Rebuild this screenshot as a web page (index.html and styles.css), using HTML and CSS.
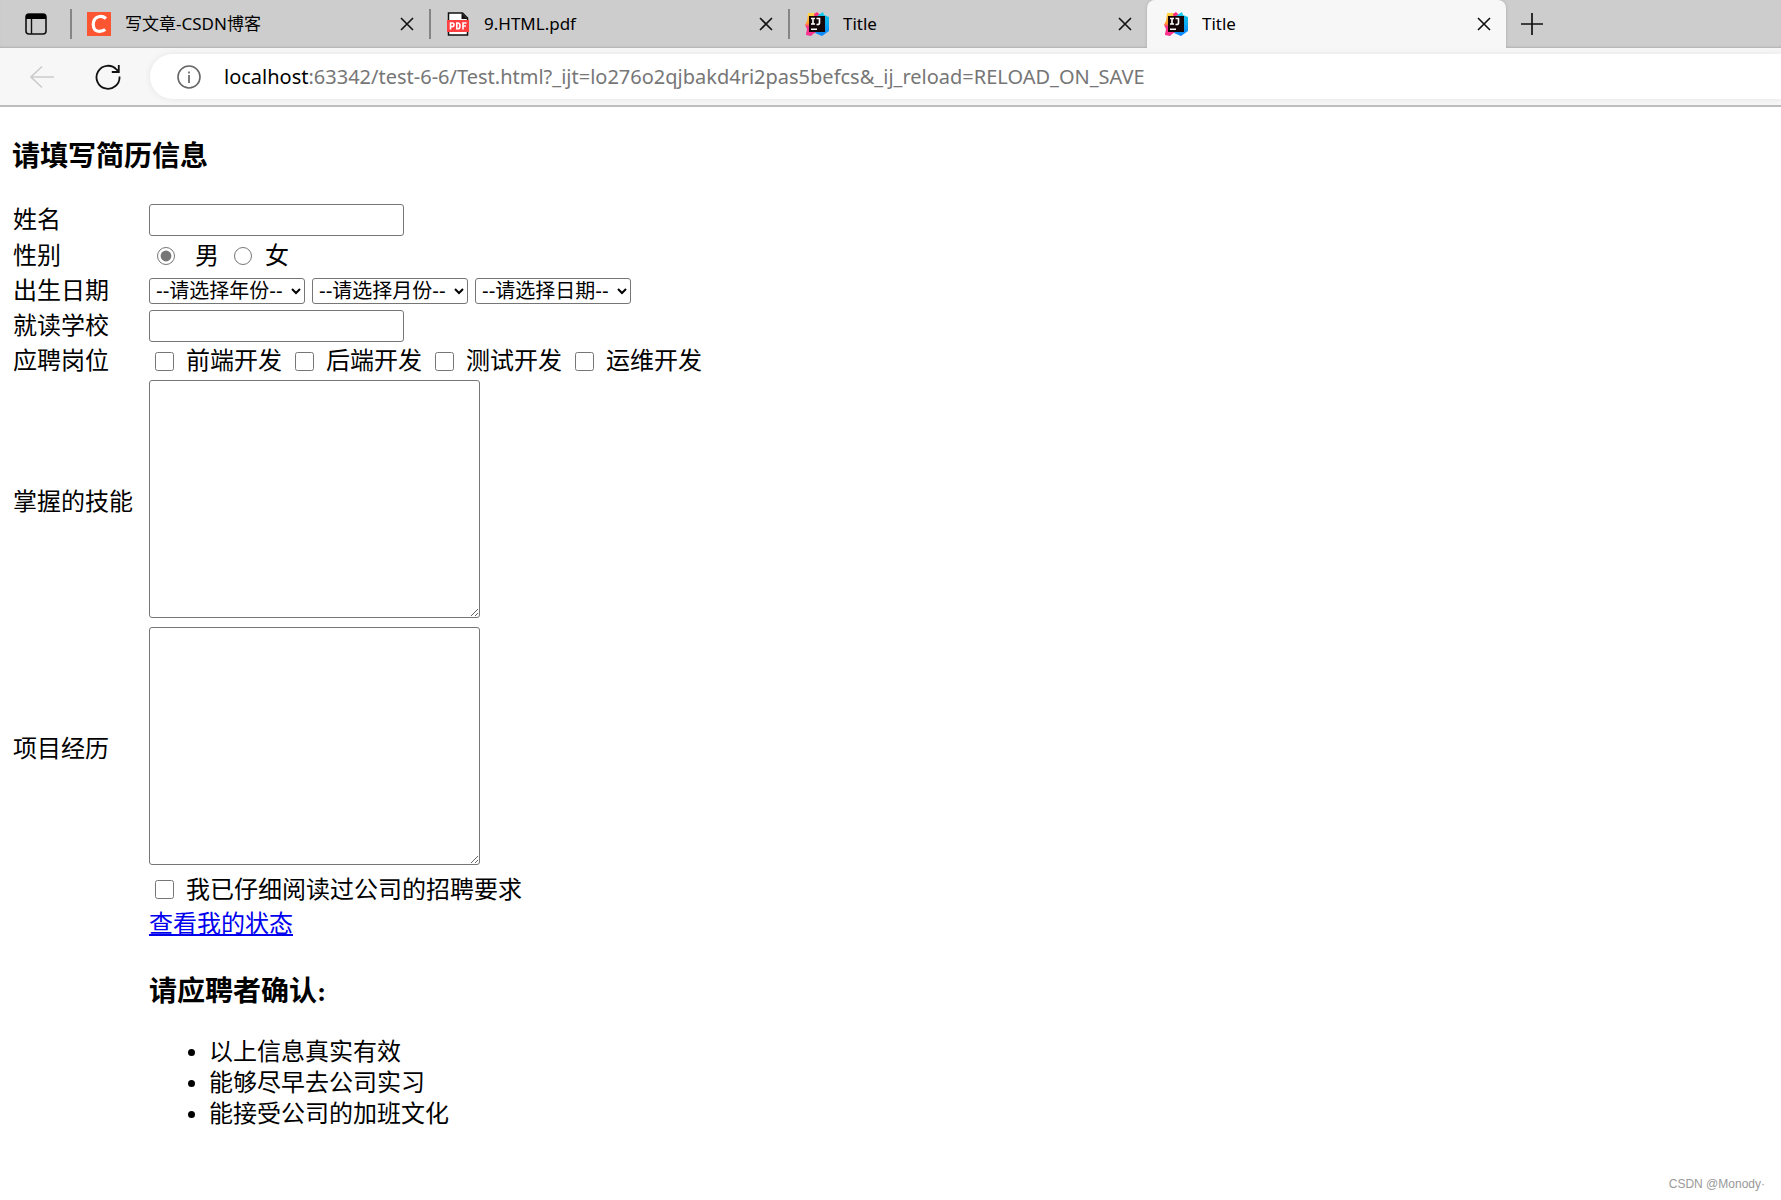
FILE: index.html
```html
<!DOCTYPE html>
<html lang="zh-CN">
<head>
<meta charset="utf-8">
<title>Title</title>
<link rel="stylesheet" href="styles.css">
</head>
<body>
<svg class="defs" aria-hidden="true">
  <defs>
    <linearGradient id="ij-blue" x1="0" y1="0" x2="0" y2="1"><stop offset="0" stop-color="#12cfe8"/><stop offset="1" stop-color="#0a84ff"/></linearGradient>
    <linearGradient id="ij-warm" x1="0" y1="0" x2="0" y2="1"><stop offset="0" stop-color="#ffd84a"/><stop offset=".45" stop-color="#ff9a2b"/><stop offset=".6" stop-color="#ff318c"/><stop offset="1" stop-color="#e8308f"/></linearGradient>
    <symbol id="idea" viewBox="0 0 24 24">
      <path fill="url(#ij-warm)" d="M3 1l8 0 3 4-2 13-6 6-5-1 1-6-2-4 2-4z"/>
      <path fill="#ff2d7e" d="M9 2l3-2 4 4-6 3z"/>
      <path fill="#ff318c" d="M3 16l9 4-7 3-4 0z"/>
      <path fill="url(#ij-blue)" d="M12 4l6-4 1 3 5 2v14l-7 5-7-3 4-5z"/>
      <path fill="#150509" d="M4 4h16v16H4z"/>
      <path fill="none" stroke="#fff" stroke-width="1.6" d="M6 6.5h4M8 6.5v6M6 12h4M11.500 6.500h3v4.500q0 1.500-2 1.500h-1"/>
      <path fill="#fff" d="M6 16.500h6v1.500H6z"/>
    </symbol>
    <symbol id="cross" viewBox="0 0 14 14"><path fill="none" stroke="#111" stroke-width="1.6" d="M1 1l12 12M13 1L1 13"/></symbol>
  </defs>
</svg>

<header class="browser">
  <div class="tabstrip">
    <button class="icon-button workspace" aria-label="标签页操作">
      <svg width="22" height="22" viewBox="0 0 22 22"><rect x="1" y="1" width="20" height="20" rx="3" fill="none" stroke="#111" stroke-width="1.6"/><path d="M1 6V4q0-3 3-3h14q3 0 3 3v2z" fill="#000"/><path d="M6.500 6v15" stroke="#111" stroke-width="1.400"/></svg>
    </button>
    <div class="tab">
      <svg class="favicon" viewBox="0 0 24 24"><path fill="#fc5531" d="M0 0h24v24H0z"/><path fill="none" stroke="#fff" stroke-width="3.200" d="M19 6.500Q16 4 12.500 4.500Q6.500 5.500 6.200 12.500Q6.500 19.500 12.500 19.300Q16 19.300 18.300 17.500"/></svg>
      <span class="tab-title">写文章-CSDN博客</span>
      <button class="icon-button" aria-label="关闭"><svg class="cross"><use href="#cross"/></svg></button>
    </div>
    <div class="tab">
      <svg class="favicon" viewBox="0 0 24 24"><path fill="#fff" stroke="#111" stroke-width="1.500" d="M2.500 1h14l5 5v17h-19z"/><path d="M15.500 1v6h6" fill="#111"/><rect x="1" y="8" width="22" height="12" fill="#ff3f40"/><path fill="none" stroke="#fff" stroke-width="1.600" d="M4.500 17.500v-6.500h2q1.500 0 1.500 1.800t-1.500 1.800h-2M10.800 11v5.800h1q2.200 0 2.200-2.900t-2.200-2.900zM17 17.500v-6.500h3.500M17 14h3"/></svg>
      <span class="tab-title">9.HTML.pdf</span>
      <button class="icon-button" aria-label="关闭"><svg class="cross"><use href="#cross"/></svg></button>
    </div>
    <div class="tab">
      <svg class="favicon"><use href="#idea"/></svg>
      <span class="tab-title">Title</span>
      <button class="icon-button" aria-label="关闭"><svg class="cross"><use href="#cross"/></svg></button>
    </div>
    <div class="tab tab-active">
      <svg class="favicon"><use href="#idea"/></svg>
      <span class="tab-title">Title</span>
      <button class="icon-button" aria-label="关闭"><svg class="cross"><use href="#cross"/></svg></button>
    </div>
    <button class="icon-button new-tab" aria-label="新建标签页">
      <svg width="22" height="22" viewBox="0 0 22 22"><path d="M11 0v22M0 11h22" stroke="#111" stroke-width="1.700"/></svg>
    </button>
  </div>
  <div class="toolbar">
    <button class="icon-button" aria-label="返回" disabled>
      <svg width="24" height="24" viewBox="0 0 24 24"><path d="M12 1.500L1 12l11 10.500M1 12h23" fill="none" stroke="#ccc" stroke-width="1.600"/></svg>
    </button>
    <button class="icon-button" aria-label="刷新">
      <svg width="26" height="26" viewBox="0 0 26 26"><path d="M24.500 12.500A11.500 11.500 0 1 1 21.500 5.500L23.500 7.500M23.800 1v7h-7" fill="none" stroke="#111" stroke-width="1.800"/></svg>
    </button>
    <div class="address">
      <svg width="24" height="24" viewBox="0 0 24 24"><circle cx="12" cy="12" r="11" fill="none" stroke="#666" stroke-width="1.600"/><path d="M12 10v8M12 6.500v2" stroke="#666" stroke-width="1.700"/></svg>
      <div class="url" role="textbox" aria-label="地址栏">localhost<span class="url-path">:63342/test-6-6/Test.html?_ijt=lo276o2qjbakd4ri2pas5befcs&amp;_ij_reload=RELOAD_ON_SAVE</span></div>
    </div>
  </div>
</header>

<main class="page">
  <h3 class="heading">请填写简历信息</h3>
  <form class="form">
    <label for="name">姓名</label>
    <div class="field"><input class="text" type="text" id="name"></div>

    <span>性别</span>
    <div class="field genders">
      <input class="radio" type="radio" name="gender" id="male" checked><label class="male" for="male">男</label>
      <input class="radio" type="radio" name="gender" id="female"><label for="female">女</label>
    </div>

    <label for="year">出生日期</label>
    <div class="field dates">
      <select class="select" id="year"><option>--请选择年份--</option></select>
      <select class="select" aria-label="月份"><option>--请选择月份--</option></select>
      <select class="select" aria-label="日期"><option>--请选择日期--</option></select>
    </div>

    <label for="school">就读学校</label>
    <div class="field"><input class="text" type="text" id="school"></div>

    <span>应聘岗位</span>
    <div class="field checks">
      <label class="check"><input class="box" type="checkbox">前端开发</label>
      <label class="check"><input class="box" type="checkbox">后端开发</label>
      <label class="check"><input class="box" type="checkbox">测试开发</label>
      <label class="check"><input class="box" type="checkbox">运维开发</label>
    </div>

    <label for="skills">掌握的技能</label>
    <div class="area-cell"><textarea class="area" id="skills"></textarea></div>

    <label for="projects">项目经历</label>
    <div class="area-cell"><textarea class="area" id="projects"></textarea></div>

    <div class="field checks second"><label class="check"><input class="box" type="checkbox">我已仔细阅读过公司的招聘要求</label></div>
    <div class="field second"><a href="#">查看我的状态</a></div>
    <section class="second">
      <h3 class="heading">请应聘者确认:</h3>
      <ul class="terms">
        <li>以上信息真实有效</li>
        <li>能够尽早去公司实习</li>
        <li>能接受公司的加班文化</li>
      </ul>
    </section>
  </form>
</main>
<div class="watermark">CSDN @Monody·</div>
</body>
</html>
```
FILE: styles.css
```css
* { box-sizing: border-box; }

body {
  position: relative;
  min-height: 100vh;
  margin: 0;
  background: #fff;
  color: #000;
  font: 24px/32px "Liberation Serif", "Noto Sans CJK SC", sans-serif;
}

.defs { position: absolute; width: 0; height: 0; }

/* Browser frame */
.browser {
  border-bottom: 2px solid #bdbdbd;
  background: #f7f7f7;
  font-family: "Noto Sans", "Noto Sans CJK SC", sans-serif;
}

.tabstrip {
  display: flex;
  align-items: center;
  height: 48px;
  background: #cdcdcd;
  box-shadow: inset 0 -2px 2px -1px #b0b0b0;
}

.icon-button {
  display: flex;
  align-items: center;
  justify-content: center;
  flex: none;
  padding: 0;
  border: 0;
  background: none;
}

.workspace { width: 70px; height: 48px; padding-left: 2px; }

.tab {
  display: flex;
  align-items: center;
  flex: 0 1 359px;
  min-width: 0;
  height: 30px;
  padding: 0 15px;
  border-left: 2px solid #858585;
}

.tab-active {
  height: 48px;
  border-left-color: #f7f7f7;
  border-radius: 8px 8px 0 0;
  background: #f7f7f7;
  box-shadow: 0 0 3px #aaa;
  clip-path: inset(0 -4px 0 -4px);
}

.favicon { flex: none; width: 24px; height: 24px; }

.tab-title {
  flex: 1;
  margin-left: 14px;
  overflow: hidden;
  font-size: 17px;
  line-height: 24px;
  white-space: nowrap;
}

.cross { width: 14px; height: 14px; }

.new-tab { width: 52px; height: 48px; }

.toolbar {
  display: flex;
  align-items: center;
  gap: 41px;
  height: 57px;
  padding-left: 30px;
}

.address {
  display: flex;
  align-items: center;
  flex: 1;
  gap: 23px;
  height: 45px;
  margin-left: -12px;
  padding-left: 27px;
  border-radius: 23px 0 0 23px;
  background: #fff;
  box-shadow: 0 0 6px #e4e4e4;
}

.url {
  font-size: 20px;
  line-height: 28px;
  white-space: nowrap;
}

.url-path { color: #767676; }

/* Resume form */
.page { padding: 34px 12px; }

.heading {
  margin: 0;
  font-size: 28px;
  line-height: 32px;
}

.form {
  display: grid;
  grid-template-columns: 133px 1fr;
  align-items: center;
  gap: 3px;
  margin-top: 31px;
  padding-left: 1px;
}

.second { grid-column: 2; }

.field {
  display: flex;
  align-items: center;
  height: 32px;
}

.text {
  width: 255px;
  height: 32px;
  border: 1px solid #767676;
  border-radius: 3px;
}

.genders {
  gap: 13px;
  height: 33px;
  padding-left: 8px;
}

.male { margin: 0 2px 0 7px; }

.radio {
  width: 18px;
  height: 18px;
  margin: 0;
  accent-color: #767676;
}

.dates { gap: 7px; }

.select {
  width: 156px;
  height: 26px;
  padding: 0 0 0 2px;
  border: 1px solid #767676;
  border-radius: 3px;
  background: #fff;
  color: #000;
  font: 20px "Liberation Sans", "Noto Sans CJK SC", sans-serif;
}

.checks {
  gap: 14px;
  height: 31px;
  padding-left: 6px;
}

.check {
  display: flex;
  align-items: center;
  gap: 12px;
}

.check + .check { margin-left: -1px; }

.box { width: 19px; height: 19px; margin: 0; }

.area-cell { height: 244px; }

.area {
  display: block;
  width: 331px;
  height: 238px;
  border: 1px solid #767676;
  border-radius: 3px;
  resize: both;
}

.second .heading { margin: 33px 0 29px; }

.terms {
  margin: 0;
  padding-left: 60px;
  line-height: 31px;
}

.watermark {
  position: absolute;
  right: 16px;
  bottom: 7px;
  color: #999;
  font: 12px/18px "Liberation Sans", sans-serif;
}
```
